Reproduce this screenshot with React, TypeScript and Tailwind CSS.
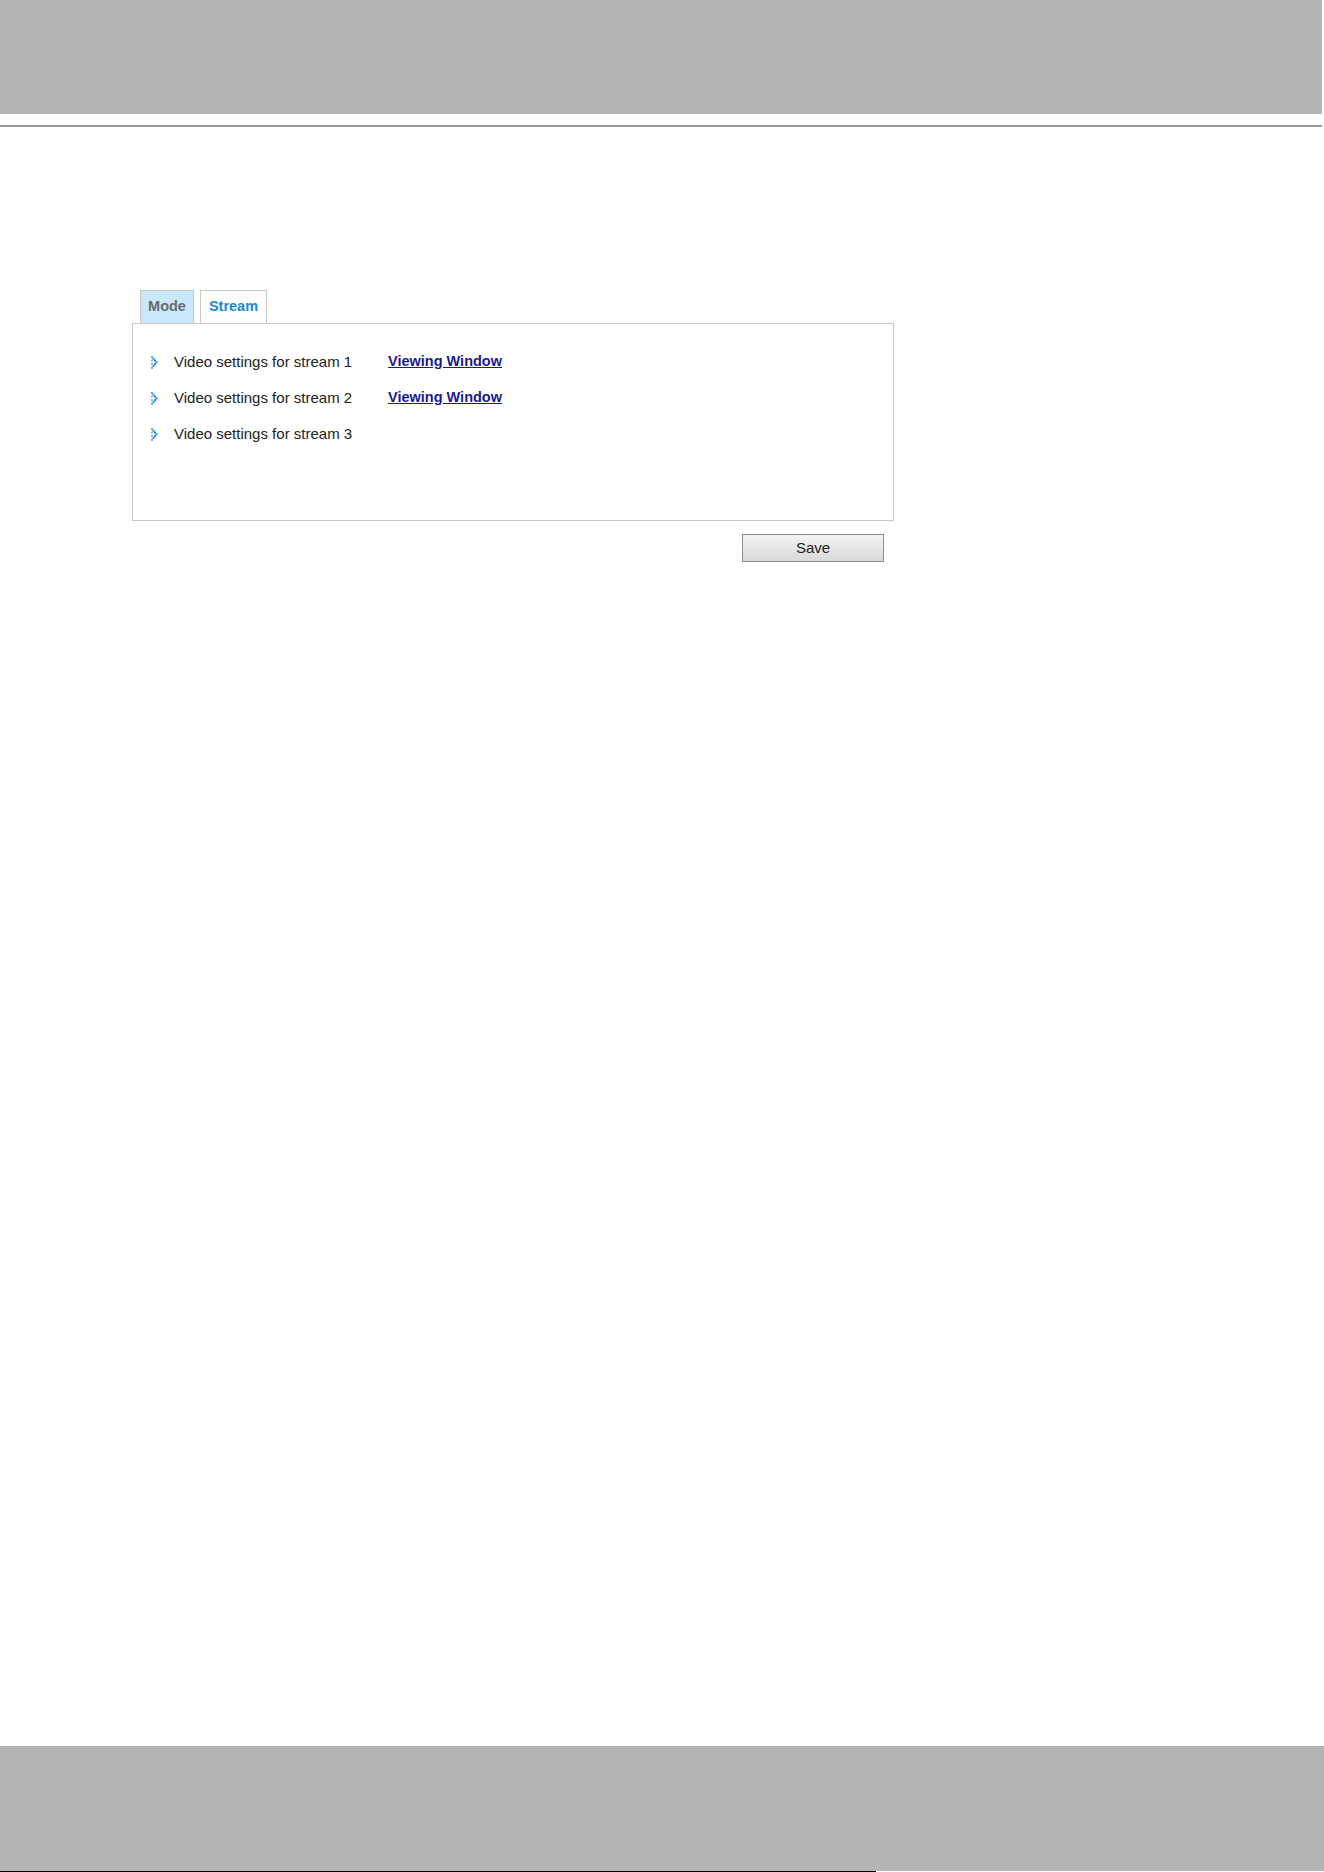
import React from "react";

const rows = [
  { label: "Video settings for stream 1", link: true },
  { label: "Video settings for stream 2", link: true },
  { label: "Video settings for stream 3", link: false },
];

function DotArrow() {
  // small dotted chevron bullet
  const dots: [number, number, string][] = [
    [0, 0, "#5aaee0"],
    [1.5, 1.8, "#2a8fd4"],
    [3, 3.6, "#1a80c8"],
    [4.5, 5.4, "#1a80c8"],
    [3, 7.2, "#1a80c8"],
    [1.5, 9, "#2a8fd4"],
    [0, 10.8, "#5aaee0"],
    [0, 3.6, "#7fc0ea"],
    [0, 7.2, "#7fc0ea"],
  ];
  return (
    <svg width="7" height="13" viewBox="0 0 7 13" className="shrink-0">
      {dots.map(([x, y, c], i) => (
        <rect key={i} x={x} y={y} width="2" height="2" fill={c} />
      ))}
    </svg>
  );
}

export default function App() {
  return (
    <div
      className="flex h-[1872px] w-[1324px] flex-col bg-white text-[#222]"
      style={{ fontFamily: '"Liberation Sans", Arial, sans-serif' }}
    >
      <header className="h-[114px] w-[1322px] bg-[#b3b4b6]" />
      <div className="mt-[11px] h-[2px] w-[1322px] bg-[#9a9a9a]" />

      <main className="ml-[132px] mt-[163px] w-[762px]">
        <div className="flex gap-[6px] pl-[8px]">
          <div className="flex h-[33px] w-[54px] items-center justify-center border border-b-0 border-[#c9c6bf] bg-[#c8e9fb] text-[14.5px] font-bold text-[#6a6a6a]">
            Mode
          </div>
          <div className="flex h-[33px] w-[67px] items-center justify-center border border-b-0 border-[#c9c6bf] bg-white text-[14.5px] font-bold text-[#1a8ad4]">
            Stream
          </div>
        </div>
        <div className="h-[198px] border border-[#cdc9c2] pt-[20px]">
          {rows.map((r) => (
            <div key={r.label} className="flex h-[36px] items-center">
              <div className="ml-[18px] w-[23px]">
                <DotArrow />
              </div>
              <span className="w-[214px] text-[15px] text-[#222]">{r.label}</span>
              {r.link && (
                <a href="#" className="text-[14.5px] font-bold text-[#1b1b8c] underline">
                  Viewing Window
                </a>
              )}
            </div>
          ))}
        </div>
        <div className="flex justify-end pr-[10px] pt-[13px]">
          <button className="h-[28px] w-[142px] border border-[#8c8c8c] bg-gradient-to-b from-[#f4f4f4] to-[#d9d9d9] text-[15px] text-[#222]">
            Save
          </button>
        </div>
      </main>

      <footer className="mt-auto flex h-[126px] flex-col">
        <div className="flex-1 bg-[#b3b4b6]" />
        <div className="h-[1px] w-[876px] bg-black" />
      </footer>
    </div>
  );
}
